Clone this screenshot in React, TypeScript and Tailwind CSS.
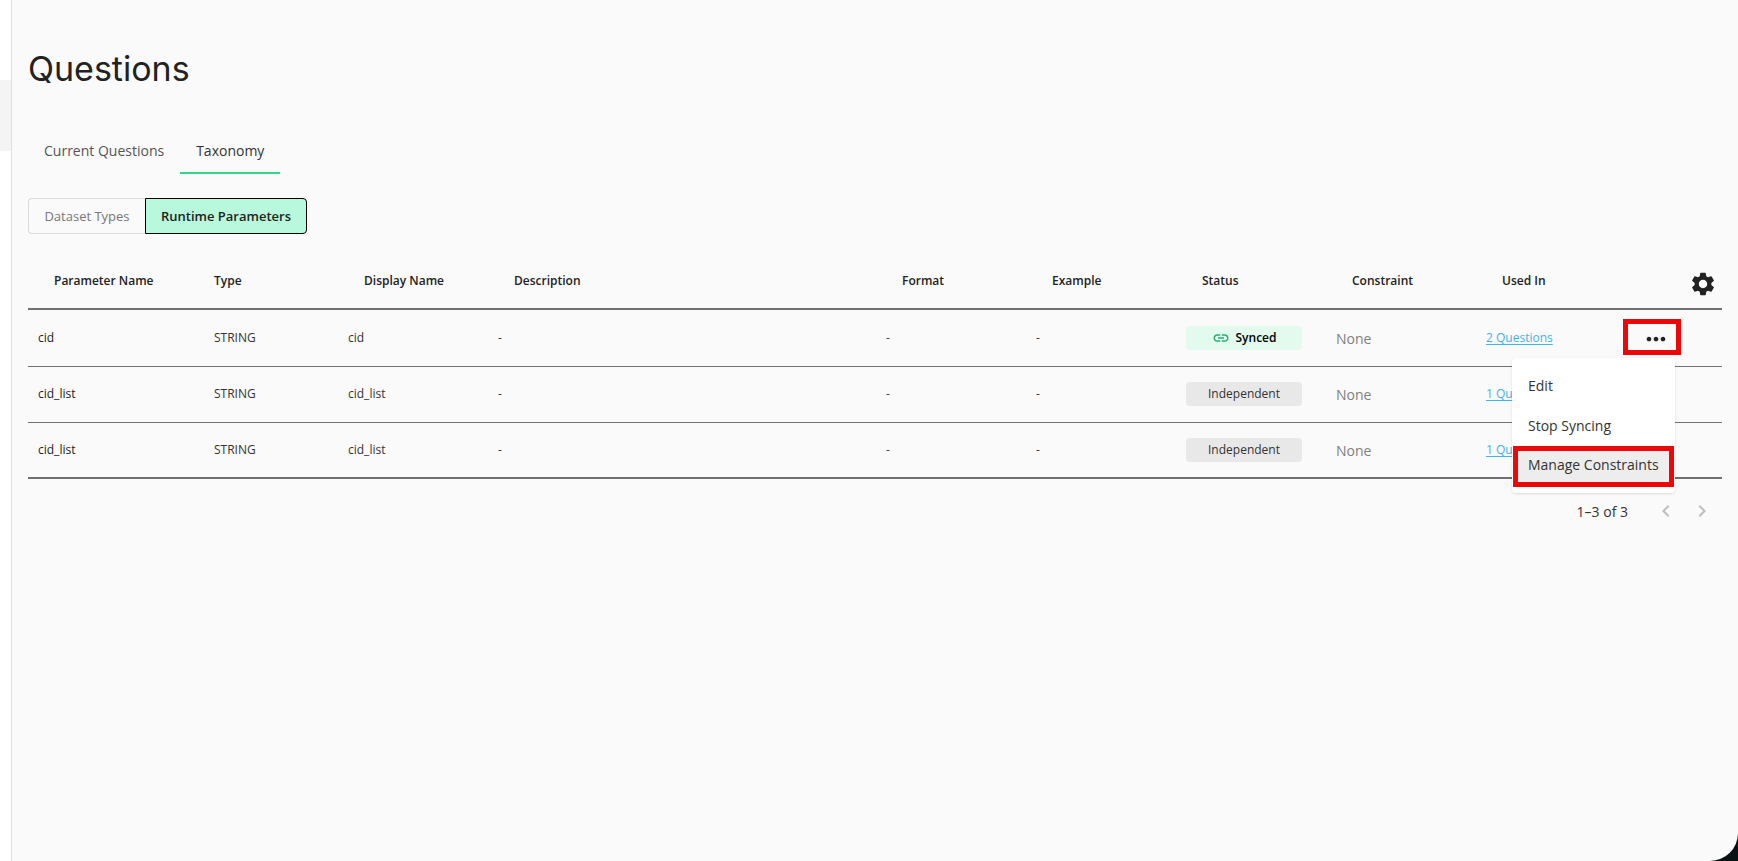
import React, { useState } from "react";
import {
  MdChevronLeft,
  MdChevronRight,
  MdLink,
  MdMoreHoriz,
  MdSettings,
} from "react-icons/md";

interface Parameter {
  id: number;
  name: string;
  type: string;
  displayName: string;
  status: "Synced" | "Independent";
  usedIn: string;
}

const parameters: Parameter[] = [
  { id: 1, name: "cid", type: "STRING", displayName: "cid", status: "Synced", usedIn: "2 Questions" },
  { id: 2, name: "cid_list", type: "STRING", displayName: "cid_list", status: "Independent", usedIn: "1 Question" },
  { id: 3, name: "cid_list", type: "STRING", displayName: "cid_list", status: "Independent", usedIn: "1 Question" },
];

const columns = [
  { label: "Parameter Name", className: "w-[176px] pl-[26px]" },
  { label: "Type", className: "w-[134px] pl-2.5" },
  { label: "Display Name", className: "w-[150px] pl-[26px]" },
  { label: "Description", className: "pl-[26px]" },
  { label: "Format", className: "w-[150px] pl-[26px]" },
  { label: "Example", className: "w-[150px] pl-[26px]" },
  { label: "Status", className: "w-[150px] pl-[26px]" },
  { label: "Constraint", className: "w-[150px] pl-[26px]" },
  { label: "Used In", className: "w-[147px] pl-[26px]" },
];

const StatusChip = ({ status }: { status: Parameter["status"] }) => {
  if (status === "Synced") {
    return (
      <span className="flex h-6 w-[116px] items-center justify-center gap-1.5 rounded bg-[#e3faee] font-semibold text-black">
        <MdLink className="h-[18px] w-[18px] text-[#27ae6c]" />
        Synced
      </span>
    );
  }
  return (
    <span className="flex h-6 w-[116px] items-center justify-center rounded bg-[#e8e8e8]">
      {status}
    </span>
  );
};

const RowMenu = () => (
  <div
    role="menu"
    className="absolute top-[39px] right-1.5 z-10 w-[163px] rounded bg-white pt-2 pb-1.5 text-sm text-[#333] shadow"
  >
    <button role="menuitem" className="block h-10 w-full px-4 text-left">
      Edit
    </button>
    <button role="menuitem" className="block h-10 w-full px-4 text-left">
      Stop Syncing
    </button>
    <div className="px-px">
      <button
        role="menuitem"
        className="block h-[41px] w-full border-5 border-[#ec0808] bg-[#ededed] pb-1 pl-2.5 text-left whitespace-nowrap"
      >
        Manage Constraints
      </button>
    </div>
  </div>
);

function App() {
  const [openMenu, setOpenMenu] = useState<number | null>(1);

  return (
    <div className="min-h-screen bg-[#0b1214] font-['Open_Sans','Noto_Sans',sans-serif] text-[#333]">
      <div className="flex min-h-screen overflow-hidden rounded-br-[28px] bg-[#fafafa]">
        <aside className="w-3 shrink-0 border-r border-[#e0e0e0] bg-white pt-20">
          <div className="h-[71px] bg-[#f4f4f4]" />
        </aside>

        <main className="min-w-0 flex-1 px-4 pt-12">
          <h1 className="font-['Inter',sans-serif] text-[34px] leading-[42px] text-[#222]">
            Questions
          </h1>

          <div role="tablist" className="mt-9 flex text-sm">
            <button role="tab" aria-selected="false" className="h-12 px-4 pt-0.5 text-[#555]">
              Current Questions
            </button>
            <button
              role="tab"
              aria-selected="true"
              className="h-12 border-b-2 border-[#2fd88a] px-4 pt-1"
            >
              Taxonomy
            </button>
          </div>

          <div className="mt-6 flex h-9 text-[13px]">
            <button className="w-[117px] rounded-l border border-r-0 border-[#dcdcdc] pt-0.5 font-medium text-[#777]">
              Dataset Types
            </button>
            <button className="w-[162px] rounded-r border border-black bg-[#b8f9dd] pt-0.5 font-semibold text-[#222]">
              Runtime Parameters
            </button>
          </div>

          <table className="mt-[18px] w-full table-fixed border-separate border-spacing-0 text-xs">
            <thead>
              <tr className="h-[58px] text-left text-[#222] *:border-b-2 *:border-[#707070] *:pt-0.5">
                {columns.map((column) => (
                  <th key={column.label} scope="col" className={`font-semibold ${column.className}`}>
                    {column.label}
                  </th>
                ))}
                <th scope="col" className="w-[99px]">
                  <button aria-label="Table settings" className="mt-1.5 mr-[5px] ml-auto block">
                    <MdSettings className="h-7 w-7" />
                  </button>
                </th>
              </tr>
            </thead>
            <tbody>
              {parameters.map((param) => (
                <tr
                  key={param.id}
                  className="h-14 *:border-b *:border-[#707070] first:h-[57px] even:*:pb-px last:*:border-b-2"
                >
                  <td className="pl-2.5 font-medium text-[#222]">{param.name}</td>
                  <td className="pl-2.5">{param.type}</td>
                  <td className="pl-2.5">{param.displayName}</td>
                  <td className="pl-2.5">-</td>
                  <td className="pl-2.5">-</td>
                  <td className="pl-2.5">-</td>
                  <td className="pl-2.5">
                    <StatusChip status={param.status} />
                  </td>
                  <td className="pt-0.5 pl-2.5 text-sm text-[#808080]">None</td>
                  <td className="pl-2.5">
                    <a href="#" className="text-[#42b4e6] underline underline-offset-2">
                      {param.usedIn}
                    </a>
                  </td>
                  <td className="pb-0.5">
                    {openMenu === param.id && (
                      <div className="relative w-[58px]">
                        <button
                          aria-label="Row actions"
                          className="flex h-9 w-full items-center justify-center border-5 border-[#ec0808] pt-1 pl-2 text-[#222]"
                          onClick={() => setOpenMenu(null)}
                        >
                          <MdMoreHoriz className="h-7 w-7 shrink-0" />
                        </button>
                        <RowMenu />
                      </div>
                    )}
                  </td>
                </tr>
              ))}
            </tbody>
          </table>

          <div className="mt-5 flex items-center justify-end pr-2">
            <span className="mr-[26px] pt-0.5 text-sm">1–3 of 3</span>
            <button aria-label="Previous page" disabled className="mr-3 text-[#bdbdbd]">
              <MdChevronLeft className="h-6 w-6" />
            </button>
            <button aria-label="Next page" disabled className="text-[#bdbdbd]">
              <MdChevronRight className="h-6 w-6" />
            </button>
          </div>
        </main>
      </div>
    </div>
  );
}

export default App;
